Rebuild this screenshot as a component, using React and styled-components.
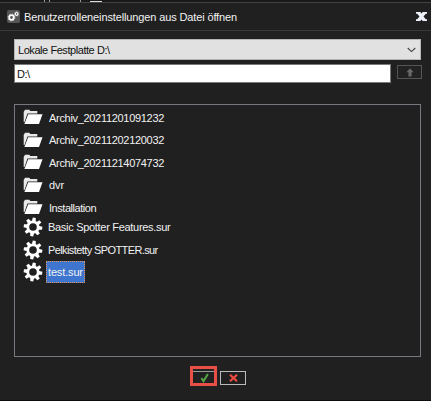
import React from "react";
import styled, { createGlobalStyle } from "styled-components";

const folders = [
  { name: "Archiv_20211201091232", spacing: "-0.31px" },
  { name: "Archiv_20211202120032", spacing: "-0.31px" },
  { name: "Archiv_20211214074732", spacing: "-0.31px" },
  { name: "dvr", spacing: "0" },
  { name: "Installation", spacing: "-0.45px" },
];

const files = [
  { name: "Basic Spotter Features.sur", spacing: "-0.3px" },
  { name: "Pelkistetty SPOTTER.sur", spacing: "-0.6px" },
  { name: "test.sur", spacing: "-0.15px", selected: true },
];

// eight flat teeth around a ring
const Gear = () => (
  <svg width="20" height="20" viewBox="-10 -10 20 20">
    <g fill="#fff">
      {[0, 45, 90, 135, 180, 225, 270, 315].map((a) => (
        <path key={a} d="M-2-5 L-1.5-9.3 H1.5 L2-5Z" transform={`rotate(${a + 8})`} />
      ))}
    </g>
    <circle r="5.2" fill="none" stroke="#fff" strokeWidth="2.8" />
  </svg>
);

const FolderIcon = () => (
  <svg width="20" height="16" viewBox="0 0 20 16">
    <path d="M.7 13 V3 L2 .8 H6.3 L7.3 2.1 H14.3 V4.6 H4.5 L1.5 13Z" fill="#e9e9e9" />
    <path d="M5.2 5.3 H19.5 L16 14.9 H1.4Z" fill="#fff" />
  </svg>
);

const App = () => {
  return (
    <>
      <GlobalStyle />
      <Backdrop>
        <Behind>
          <svg width="110" height="2" viewBox="0 0 110 2">
            <path d="M44 0h1v2h-1zM49 0h1v2h-1zM80 0h1v2h-1z" fill="#999" />
            <path d="M90 1h12v1h-12z" fill="#ddd" />
          </svg>
        </Behind>
        <TitleBar>
          <TitleIcon>
            <svg width="13" height="13" viewBox="0 0 13 13">
              <circle cx="4.5" cy="7.5" r="2.3" fill="none" stroke="#fff" strokeWidth="1.8" />
              <circle cx="4.5" cy="7.5" r="3.4" fill="none" stroke="#eee" strokeWidth="0.8" strokeDasharray="1.3 1.37" />
              <circle cx="9.6" cy="3.9" r="1.4" fill="none" stroke="#fff" strokeWidth="1.2" />
              <circle cx="9.6" cy="3.9" r="2.2" fill="none" stroke="#ddd" strokeWidth="0.6" strokeDasharray="1 .73" />
            </svg>
          </TitleIcon>
          <Title>Benutzerrolleneinstellungen aus Datei öffnen</Title>
          <CloseButton aria-label="Schließen">
            <svg width="11" height="9" viewBox="0 0 11 9">
              <path d="M0 0h4.3l1.2 1.4L6.7 0H11v1.8H9.8L7.5 4.5l2.3 2.7H11V9H6.7L5.5 7.6 4.3 9H0V7.2h1.2l2.3-2.7-2.3-2.7H0z" fill="#eef0fa" />
            </svg>
          </CloseButton>
        </TitleBar>
        <Content>
          <Drive>
            <Label $spacing="-0.44px">Lokale Festplatte D:\</Label>
            <svg width="9" height="6" viewBox="0 0 9 6">
              <path d="M.7 1 L4.5 4.6 L8.3 1" fill="none" stroke="#444" strokeWidth="1.1" />
            </svg>
          </Drive>
          <PathRow>
            <PathField>D:\</PathField>
            <UpButton aria-label="Nach oben">
              <svg width="8" height="9" viewBox="0 0 8 9">
                <path d="M4 .3 L7.6 4.3 H5.6 V8.6 H2.4 V4.3 H.4Z" fill="#686868" />
              </svg>
            </UpButton>
          </PathRow>
          <List>
            {folders.map((f) => (
              <FolderRow key={f.name}>
                <FolderIcon />
                <Label $spacing={f.spacing}>{f.name}</Label>
              </FolderRow>
            ))}
            <Files>
              {files.map((f) => (
                <FileRow key={f.name}>
                  <Gear />
                  <FileName $spacing={f.spacing} $selected={f.selected}>
                    {f.name}
                  </FileName>
                </FileRow>
              ))}
            </Files>
          </List>
          <Footer>
            <OkButton aria-label="OK">
              <svg width="9" height="10" viewBox="0 0 9 10">
                <path d="M1.4 5 L3.5 8.2 L7.9 1" fill="none" stroke="#58a648" strokeWidth="2" />
              </svg>
            </OkButton>
            <CancelButton aria-label="Abbrechen">
              <svg width="9" height="8" viewBox="0 0 9 8">
                <path d="M1 .8 L8 7.2 M8 .8 L1 7.2" fill="none" stroke="#ee4a41" strokeWidth="2.2" />
              </svg>
            </CancelButton>
          </Footer>
        </Content>
      </Backdrop>
    </>
  );
};

const GlobalStyle = createGlobalStyle`
  * {
    box-sizing: border-box;
  }
  body {
    margin: 0;
    background: #202020;
    font-family: "Liberation Sans", Arial, sans-serif;
    font-size: 11px;
    color: #f2f2f2;
  }
  svg {
    display: block;
    flex: none;
  }
  button {
    padding: 0;
    font: inherit;
  }
`;

const Backdrop = styled.div`
  width: 431px;
  height: 401px;
  overflow: hidden;
  background: #202020;
  border-bottom: 1px solid #0c0c0c;
`;

const Behind = styled.div`
  height: 2px;
  background: #191919;
`;

const TitleBar = styled.header`
  display: flex;
  align-items: center;
  height: 29px;
  padding: 0 4px 0 7px;
  border-top: 1px solid #424242;
  border-bottom: 1px solid #3a3a3a;
`;

const TitleIcon = styled.div`
  display: flex;
  width: 13px;
  height: 13px;
  border-radius: 2px;
  background: #555;
`;

const Title = styled.h1`
  flex: 1;
  margin: 0 0 0 4px;
  font-size: 11px;
  font-weight: normal;
  white-space: nowrap;
  letter-spacing: -0.13px;
`;

const CloseButton = styled.button`
  border: 0;
  background: none;
`;

const Content = styled.main`
  padding: 8px 9px 0 14px;
`;

const Label = styled.span`
  white-space: nowrap;
  letter-spacing: ${(props) => props.$spacing};
`;

const Drive = styled.div`
  display: flex;
  align-items: center;
  justify-content: space-between;
  width: 407px;
  height: 21px;
  padding: 0 4px 0 3px;
  border: 1px solid #b5b5b5;
  background: #e1e1e1;
  color: #111;
`;

const PathRow = styled.div`
  display: flex;
  gap: 6px;
  margin-top: 4px;
`;

const PathField = styled.div`
  width: 377px;
  height: 19px;
  padding-left: 2px;
  border: 1px solid #7a7a7a;
  background: #fff;
  color: #111;
  letter-spacing: -0.5px;
  line-height: 18px;
`;

const UpButton = styled.button`
  display: flex;
  align-items: center;
  justify-content: center;
  width: 25px;
  height: 14px;
  margin-top: 1px;
  border: 1px solid #555;
  background: #222;
`;

const List = styled.div`
  width: 407px;
  height: 253px;
  margin-top: 21px;
  padding: 1px 0 0 8px;
  border: 1px solid #777981;
`;

const FolderRow = styled.div`
  display: flex;
  align-items: center;
  gap: 6px;
  height: 22.5px;

  span {
    padding-top: 1px;
  }
`;

const Files = styled.div`
  margin-top: -2.5px;
`;

const FileRow = styled.div`
  display: flex;
  align-items: center;
  gap: 3px;
  height: 22.5px;
`;

const FileName = styled.span`
  padding: 0 1px;
  border: 1px dotted ${(props) => (props.$selected ? "#e3955c" : "transparent")};
  background: ${(props) => (props.$selected ? "#3e75ce" : "none")};
  letter-spacing: ${(props) => props.$spacing};
  line-height: 20px;
  white-space: nowrap;
`;

const Footer = styled.footer`
  display: flex;
  gap: 3px;
  margin-top: 9px;
  padding-left: 176px;
`;

const OkButton = styled.button`
  display: flex;
  align-items: center;
  justify-content: center;
  width: 27px;
  height: 20px;
  padding: 3px 0 0 1px;
  border: 3px solid #e94f46;
  background: #202020;
  box-shadow: inset 0 2px 0 #222, inset 0 3px 0 #999;
`;

const CancelButton = styled.button`
  display: flex;
  align-items: center;
  justify-content: center;
  width: 26px;
  height: 14px;
  margin-top: 5px;
  border: 1px solid #bbb;
  background: #202020;
`;

export default App;
